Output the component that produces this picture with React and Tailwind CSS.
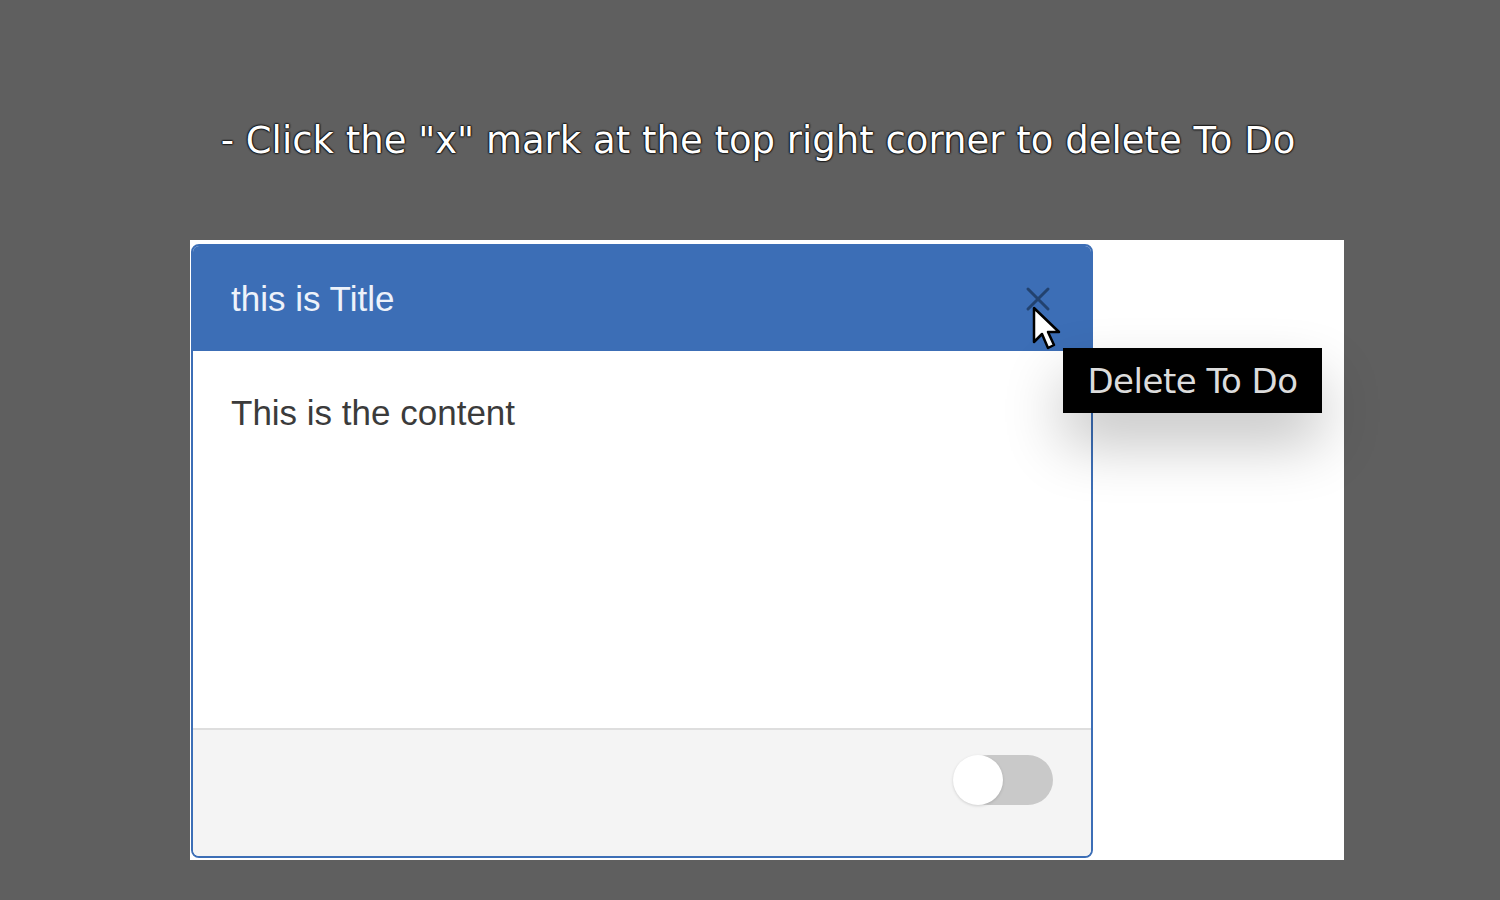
import React from "react"

function CloseMark() {
  return (
    <svg width="26" height="26" viewBox="0 0 26 26" className="block">
      <path d="M3 3 L23 23 M23 3 L3 23" stroke="#22426f" strokeWidth="3" strokeLinecap="round" />
    </svg>
  )
}

function Cursor() {
  return (
    <svg width="32" height="48" viewBox="0 0 32 48">
      <path
        d="M2 2 L2 36 L10 28 L16 42 L22 39 L16 26 L27 26 Z"
        fill="#ffffff"
        stroke="#000000"
        strokeWidth="2.5"
        strokeLinejoin="round"
      />
    </svg>
  )
}

function Toggle() {
  return (
    <div className="relative w-[100px] h-[52px] flex items-center">
      <div className="absolute left-[10px] right-0 h-[50px] rounded-full bg-[#c9c9c9]" />
      <div className="relative w-[50px] h-[50px] rounded-full bg-white shadow-[0_1px_3px_rgba(0,0,0,0.15)]" />
    </div>
  )
}

function TodoCard() {
  return (
    <div className="w-[902px] h-[614px] ml-px mt-1 flex flex-col rounded-lg border-2 border-[#3c6eb6] overflow-hidden bg-white font-['Liberation_Sans',Arial,sans-serif]">
      <div className="h-[105px] shrink-0 bg-[#3c6eb6] flex items-center justify-between pl-[38px] pr-[40px]">
        <h3 className="text-[35px] text-[#edf2fa] leading-none">this is Title</h3>
        <CloseMark />
      </div>
      <div className="flex-1 px-[38px] pt-[44px]">
        <p className="text-[35px] text-[#3b3b3b] leading-none">This is the content</p>
      </div>
      <div className="h-[128px] shrink-0 border-t-2 border-[#dedede] bg-[#f4f4f4] flex items-start justify-end pt-[24px] pr-[38px]">
        <Toggle />
      </div>
    </div>
  )
}

export default function App() {
  return (
    <div className="w-[1500px] h-[900px] bg-[#5f5f5f] flex flex-col font-['DejaVu_Sans',sans-serif]">
      <div className="h-[240px] pt-[122px] text-center">
        <p className="text-[37px] leading-none text-white pl-[16px] [text-shadow:0_0_2px_#000,0_0_2px_#000,0_0_2px_#000,0_0_1px_#000]">
          - Click the "x" mark at the top right corner to delete To Do
        </p>
      </div>
      <div className="relative ml-[190px] w-[1154px] h-[620px] bg-white">
        <TodoCard />
        <div className="absolute left-[842px] top-[66px]">
          <Cursor />
        </div>
        <div className="absolute left-[873px] top-[108px] w-[259px] h-[65px] bg-black flex items-center justify-center shadow-[0_30px_60px_rgba(0,0,0,0.24)]">
          <span className="text-[34px] text-[#dcdcdc] leading-none tracking-[-0.5px]">Delete To Do</span>
        </div>
      </div>
    </div>
  )
}
